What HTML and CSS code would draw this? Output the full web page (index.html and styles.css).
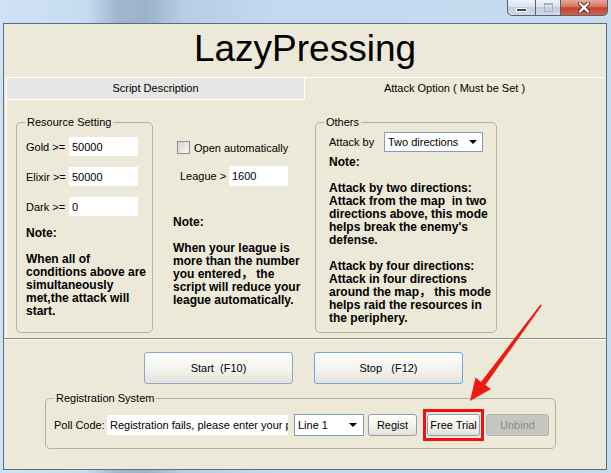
FILE: index.html
```html
<!DOCTYPE html>
<html lang="en">
<head>
  <meta charset="UTF-8" />
  <title>LazyPressing</title>
  <link rel="stylesheet" href="styles.css">
</head>
<body>

  <div class="titlebar">
    <div class="caption-btns">
      <span class="cb cb-min"><i></i></span>
      <span class="cb cb-max"><i></i></span>
      <span class="cb cb-close">
        <svg width="14" height="11" viewBox="0 0 14 11">
          <path d="M3 1.5 L11 9.5 M11 1.5 L3 9.5" stroke="#5a2a20" stroke-width="4" stroke-linecap="round" />
          <path d="M3 1.5 L11 9.5 M11 1.5 L3 9.5" stroke="#fff" stroke-width="2.4" stroke-linecap="round" />
        </svg>
      </span>
    </div>
  </div>

  <div class="window">
    <h1 class="app-title">LazyPressing</h1>

    <div class="tabs">
      <div class="tab">Script Description</div>
      <div class="tab active">Attack Option ( Must be Set )</div>
    </div>

    <div class="panel">
      <fieldset class="group res">
        <legend>Resource Setting</legend>
        <div class="res-body">
          <div class="field"><label>Gold &gt;=</label><input class="edit" value="50000"></div>
          <div class="field"><label>Elixir &gt;=</label><input class="edit" value="50000"></div>
          <div class="field"><label>Dark &gt;=</label><input class="edit" value="0"></div>
          <p class="note">Note:<br><br>When all of<br>conditions above are<br>simultaneously<br>met,the attack will<br>start.</p>
        </div>
      </fieldset>

      <div class="mid">
        <label class="check"><input type="checkbox">Open automatically</label>
        <div class="field league"><label>League &gt;</label><input class="edit" value="1600"></div>
        <p class="note">Note:<br><br>When your league is<br>more than the number<br>you entered， the<br>script will reduce your<br>league automatically.</p>
      </div>

      <fieldset class="group others">
        <legend>Others</legend>
        <div class="others-body">
          <div class="field">
            <label>Attack by</label>
            <div class="combo wide"><span>Two directions</span><i class="caret"></i></div>
          </div>
          <p class="note">Note:<br><br>Attack by two directions:<br>Attack from the map &nbsp;in two<br>directions above, this mode<br>helps break the enemy's<br>defense.<br><br>Attack by four directions:<br>Attack in four directions<br>around the map， this mode<br>helps raid the resources in<br>the periphery.</p>
        </div>
      </fieldset>
    </div>

    <div class="bottom">
      <div class="actions">
        <button class="btn big">Start &nbsp;(F10)</button>
        <button class="btn big hot">Stop &nbsp; (F12)</button>
      </div>

      <fieldset class="group reg">
        <legend>Registration System</legend>
        <div class="reg-row">
          <span class="reg-label">Poll Code:</span>
          <input class="edit code" value="Registration fails, please enter your poll code">
          <div class="combo line"><span>Line 1</span><i class="caret"></i></div>
          <button class="btn sm regist">Regist</button>
          <span class="mark"><button class="btn sm trial">Free Trial</button></span>
          <button class="btn sm unbind" disabled>Unbind</button>
        </div>
      </fieldset>
    </div>
  </div>

  <!-- flecha vermelha apontando pro Free Trial -->
  <svg class="arrow" width="611" height="473" viewBox="0 0 611 473">
    <polygon fill="#f01a14" points="540.4,304.6 541.8,305.6 485.4,385 491,389 470,401 475.5,377.5 481,382" />
  </svg>

</body>
</html>
```

FILE: styles.css
```css
body {
  margin: 0;
  width: 611px;
  height: 473px;
  overflow: hidden;
  position: relative;
  font-family: "Liberation Sans", Arial, "Noto Sans CJK SC", sans-serif;
  font-size: 11px;
  color: #000;
  background: linear-gradient(90deg, #cfe2f5 0, #c8dcf1 14%, #a3b7cf 19%, #9db2cb 24%, #b8cce3 30%, #c4d9ef 45%, #c6dbf0 100%);
}

/* barra de titulo */
.titlebar {
  height: 23px;
}
.caption-btns {
  display: flex;
  justify-content: flex-end;
  padding-right: 3px;
}
.cb {
  height: 16px;
  box-sizing: border-box;
  border: 1px solid #56626f;
  border-top: none;
  display: flex;
  align-items: center;
  justify-content: center;
}
.cb-min {
  width: 29px;
  border-radius: 0 0 0 5px;
  background: linear-gradient(#eef3f8, #d9e2ec 45%, #c1cedd 50%, #cfdbe8);
}
.cb-min i {
  display: block;
  width: 9px;
  height: 2px;
  margin-top: 5px;
  background: #3a4656;
  border: 1px solid #fff;
}
.cb-max {
  width: 25px;
  border-left: none;
  background: linear-gradient(#eef3f8, #d9e2ec 45%, #c1cedd 50%, #cfdbe8);
}
.cb-max i {
  display: block;
  width: 7px;
  height: 6px;
  border: 1px solid #a5b1bf;
  border-top-width: 2px;
}
.cb-close {
  width: 47px;
  border-left: none;
  border-radius: 0 0 5px 0;
  background: linear-gradient(#eaa899, #d8725f 45%, #c2442e 52%, #d0614a);
}

/* janela */
.window {
  margin-left: 3px;
  width: 604px;
  height: 447px;
  box-sizing: border-box;
  border: 1px solid #5d6d81;
  background: #ece9d8;
}
.app-title {
  margin: 0;
  height: 53px;
  line-height: 50px;
  font-size: 37px;
  font-weight: normal;
  text-align: center;
}

.tabs {
  display: flex;
  height: 23px;
}
.tab {
  box-sizing: border-box;
  line-height: 21px;
  text-align: center;
}
.tab:first-child {
  margin-left: 2px;
  width: 299px;
  border: 1px solid #fff;
  background: #e6e6e4;
}
.tab.active {
  flex: 1;
  margin-right: 2px;
  border-top: 1px solid #fff;
}

.panel {
  display: flex;
  align-items: flex-start;
  height: 238px;
  box-sizing: border-box;
  margin-left: 2px;
  padding-top: 16px;
  border-left: 1px solid #fff;
}

.group {
  margin: 0;
  padding: 0;
  min-width: 0;
  box-sizing: border-box;
  border: 1px solid #b3b0a4;
  border-radius: 5px;
}
.group legend {
  margin-left: 8px;
  padding: 0 2px;
  font-size: 11px;
  line-height: 13px;
}

.res {
  margin-left: 9px;
  width: 137px;
  height: 217px;
}
.res-body {
  padding: 8px 0 0 9px;
}
.field {
  display: flex;
  align-items: center;
  height: 19px;
  margin-bottom: 11px;
}
.res .field label {
  width: 43px;
}
.edit {
  box-sizing: border-box;
  width: 69px;
  height: 19px;
  margin: 0;
  padding: 0 0 0 3px;
  border: none;
  background: #fff;
  font: 11px "Liberation Sans", Arial, sans-serif;
  color: #000;
}

.note {
  margin: 0;
  font-size: 12px;
  line-height: 13px;
  font-weight: bold;
  white-space: nowrap;
}

.mid {
  margin-left: 20px;
  width: 130px;
  padding-top: 25px;
}
.check {
  display: flex;
  align-items: center;
  height: 13px;
  margin-left: 4px;
}
.check input {
  appearance: none;
  width: 13px;
  height: 13px;
  margin: 0 4px 0 0;
  border: 1px solid #8e8f8c;
  background: linear-gradient(135deg, #d6d6d0, #f7f7f4);
}
.league {
  margin-top: 12px;
  height: 20px;
  padding-left: 7px;
  margin-bottom: 30px;
}
.league label {
  width: 49px;
}
.league .edit {
  width: 59px;
  height: 20px;
}

.others {
  margin-left: 12px;
  width: 182px;
  height: 217px;
}
.others-body {
  padding: 3px 0 0 13px;
}
.others .field {
  height: 20px;
  margin-bottom: 4px;
}
.others .field label {
  width: 55px;
}

.combo {
  box-sizing: border-box;
  display: flex;
  align-items: center;
  justify-content: space-between;
  height: 20px;
  padding: 0 5px 0 3px;
  border: 1px solid #7f9db9;
  background: #fff;
}
.combo.wide {
  width: 99px;
}
.caret {
  width: 0;
  height: 0;
  border-left: 4px solid transparent;
  border-right: 4px solid transparent;
  border-top: 4px solid #000;
}

/* parte de baixo */
.bottom {
  border-top: 1px solid #8c8b86;
  box-shadow: inset 0 1px 0 #fff;
}
.actions {
  display: flex;
  gap: 21px;
  padding: 13px 0 0 140px;
}
.btn {
  box-sizing: border-box;
  margin: 0;
  padding: 0;
  border: 1px solid #8fa6c4;
  border-radius: 3px;
  background: linear-gradient(#fdfdfb, #f2f1ec 60%, #e3e1d8);
  font: 11px "Liberation Sans", Arial, sans-serif;
  color: #000;
  white-space: pre;
}
.btn.big {
  width: 149px;
  height: 32px;
}
.btn.hot {
  border-color: #72a6e2;
}

.reg {
  margin: 8px 0 0 41px;
  width: 511px;
  height: 57px;
}
.reg-row {
  display: flex;
  align-items: center;
  height: 32px;
  padding: 4px 0 0 8px;
}
.reg-label {
  width: 53px;
}
.edit.code {
  width: 181px;
  height: 20px;
}
.combo.line {
  margin-left: 6px;
  width: 70px;
  height: 22px;
  padding-right: 6px;
}
.btn.sm {
  height: 22px;
  border-color: #8d9db3;
}
.regist {
  margin-left: 4px;
  width: 49px;
}
.mark {
  margin-left: 6px;
  padding: 2px 1px;
  border: 3px solid #f01010;
  display: flex;
}
.trial {
  width: 53px;
}
.btn.unbind {
  margin-left: 2px;
  width: 63px;
  border-color: #b4b3ae;
  background: #c6c5c1;
  color: #8c8c8a;
}

.arrow {
  position: absolute;
  left: 0;
  top: 0;
  pointer-events: none;
}
```
